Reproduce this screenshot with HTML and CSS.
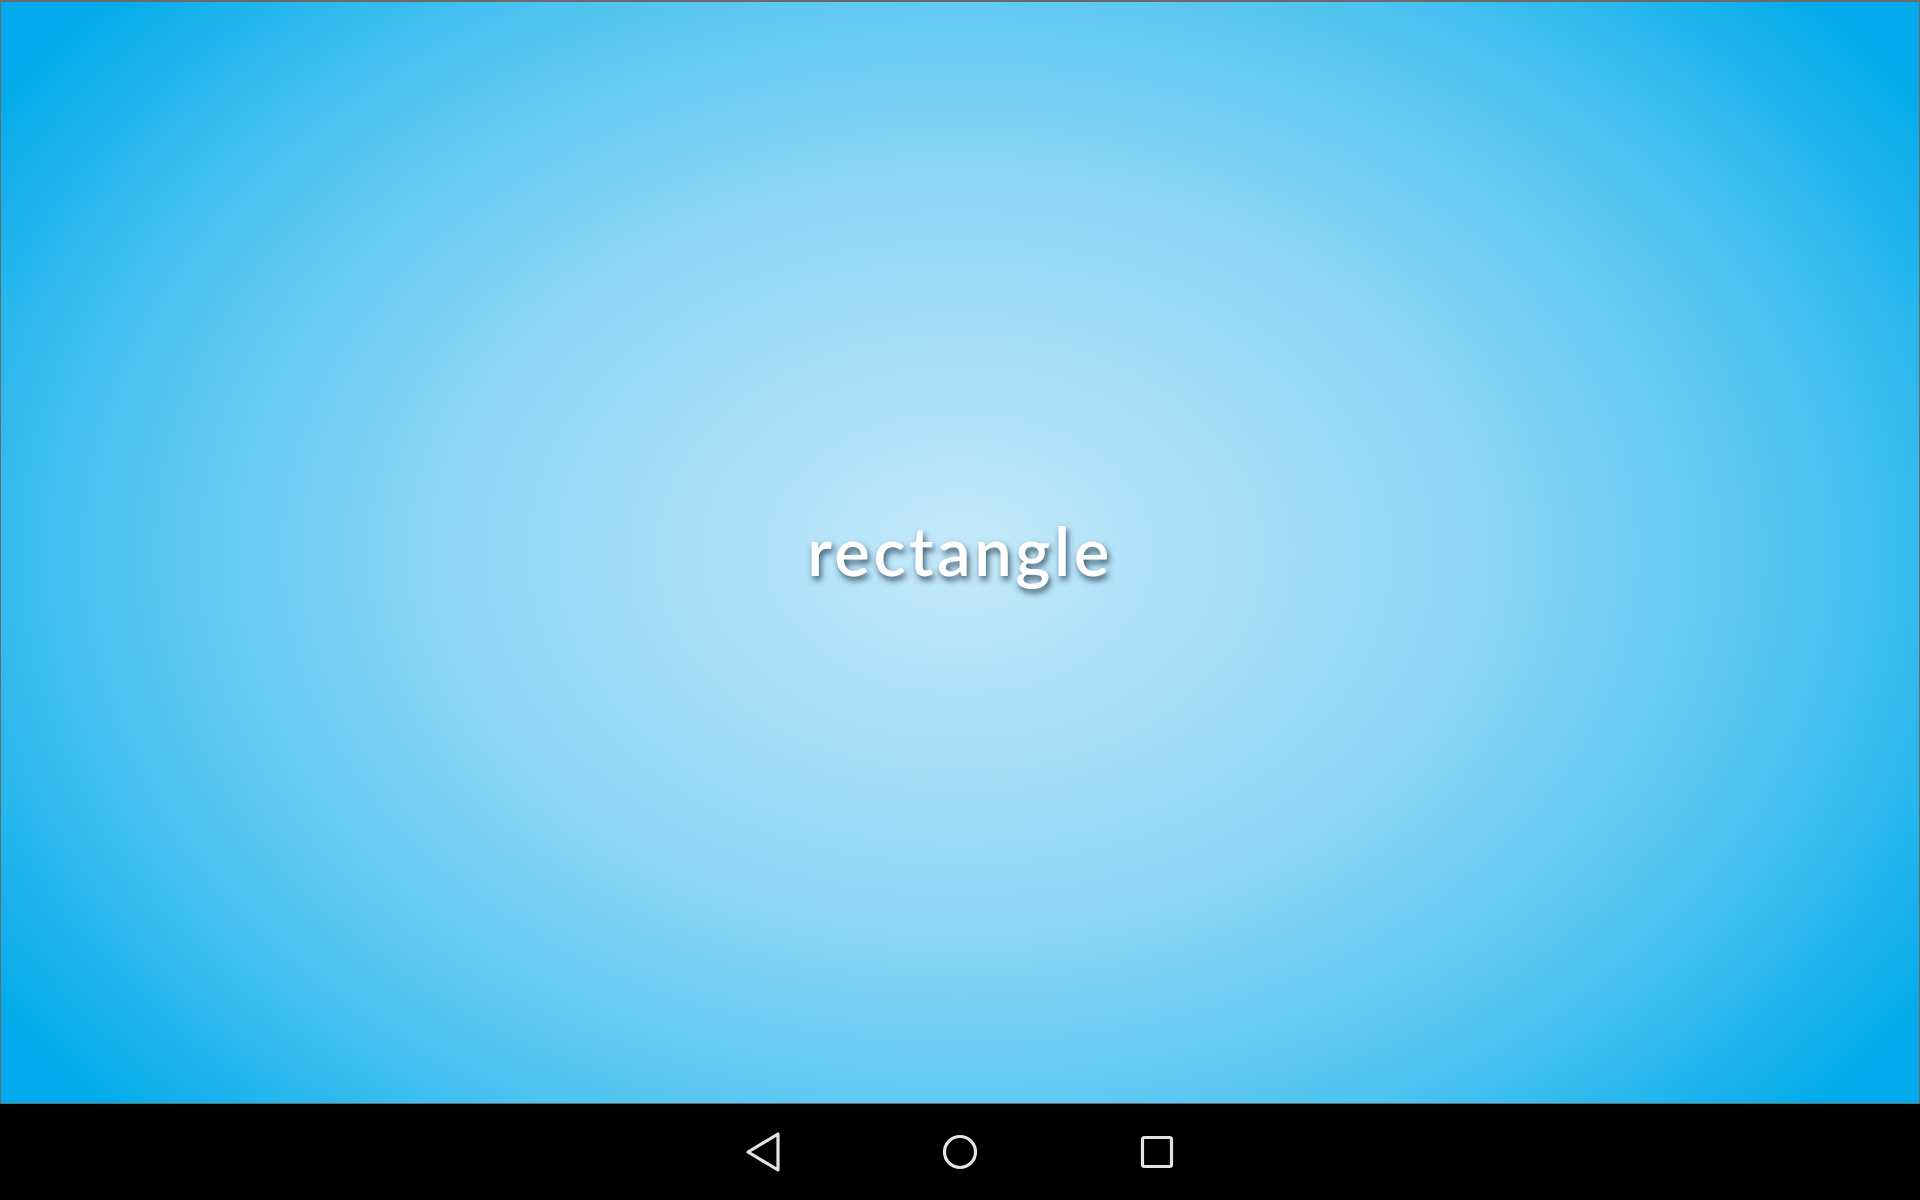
FILE: index.html
```html
<!DOCTYPE html>
<html lang="en">
<head>
<meta charset="utf-8">
<title>rectangle</title>
<link rel="stylesheet" href="styles.css">
</head>
<body>
<div class="screen">
  <main class="canvas">
    <div class="label">rectangle</div>
  </main>
  <nav class="navbar">
    <button class="nav-btn" aria-label="Back">
      <svg width="40" height="44" viewBox="0 0 40 44"><path d="M5 22 L35 4 L35 40 Z" fill="none" stroke="#e4e4e4" stroke-width="3.2" stroke-linejoin="round"/></svg>
    </button>
    <button class="nav-btn" aria-label="Home">
      <svg width="40" height="44" viewBox="0 0 40 44"><circle cx="20" cy="22" r="15.5" fill="none" stroke="#e4e4e4" stroke-width="3.2"/></svg>
    </button>
    <button class="nav-btn" aria-label="Recents">
      <svg width="40" height="44" viewBox="0 0 40 44"><rect x="5.5" y="7.5" width="29" height="29" rx="2" fill="none" stroke="#e4e4e4" stroke-width="3.2"/></svg>
    </button>
  </nav>
</div>
</body>
</html>
```
FILE: styles.css
```css
html, body {
  margin: 0;
  padding: 0;
  background: #000;
}
.screen {
  width: 1920px;
  height: 1200px;
  display: flex;
  flex-direction: column;
}
.canvas {
  height: 1104px;
  box-sizing: border-box;
  border-top: 2px solid #6a6a6a;
  border-left: 1px solid #6a6a6a;
  border-right: 1px solid #6a6a6a;
  border-bottom: 1px solid #6a6a6a;
  background: radial-gradient(ellipse 1150px 830px at 50% 50%, #c4e9fa 0%, #8dd6f6 45%, #4dc3f1 75%, #02abeb 100%);
  display: flex;
  align-items: center;
  justify-content: center;
}
.label {
  font-family: "Lato", "DejaVu Sans", sans-serif;
  font-size: 67px;
  font-weight: 600;
  letter-spacing: 3.5px;
  color: #ffffff;
  text-shadow: 2px 4px 6px rgba(30, 50, 70, 0.8);
  margin-top: -6px;
}
.navbar {
  flex: 1;
  background: #000;
  display: flex;
  justify-content: center;
  align-items: center;
  gap: 157px;
}
.nav-btn {
  background: none;
  border: 0;
  padding: 0;
  width: 40px;
  height: 44px;
  display: flex;
}
```
